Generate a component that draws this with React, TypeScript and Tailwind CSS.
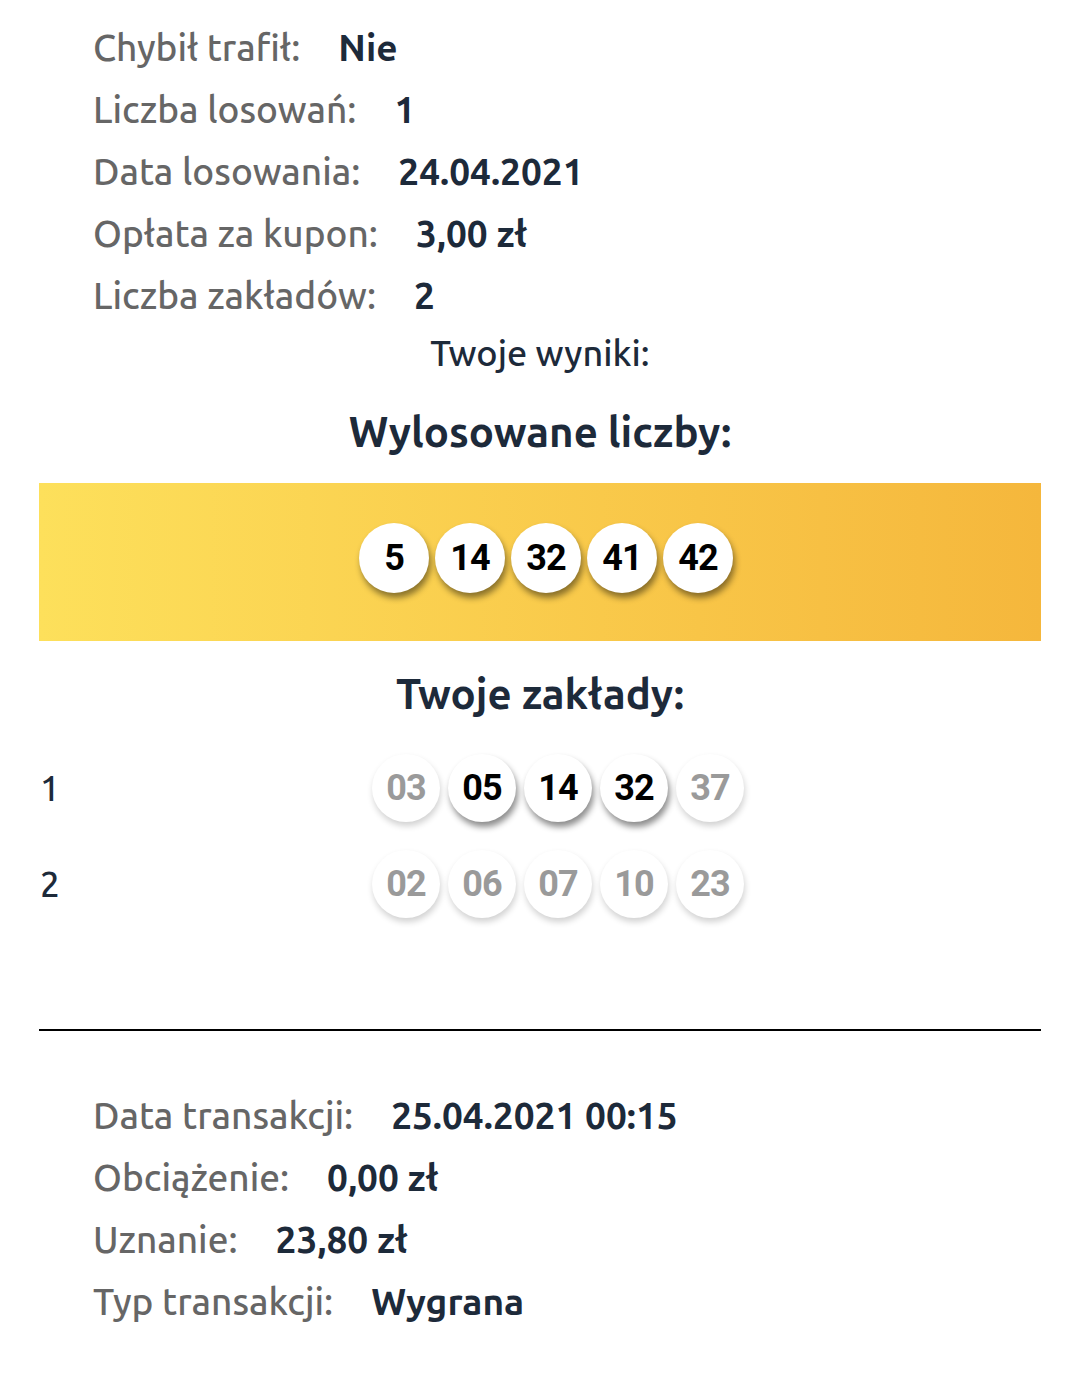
import React from 'react'

const font = { fontFamily: 'Ubuntu, "Noto Sans", sans-serif' }

function InfoRow({ label, value }: { label: string; value: string }) {
  return (
    <div className="flex items-center h-[62px]">
      <span className="text-[37px] font-medium text-[#666666]">{label}</span>
      <span className="ml-[38px] text-[37px] font-bold text-[#1d2a3a]">{value}</span>
    </div>
  )
}

function Ball({ n, size, hit = true }: { n: string; size: number; hit?: boolean }) {
  return (
    <div
      className={`flex items-center justify-center rounded-full bg-white font-bold tracking-[-1px] ${
        hit
          ? 'text-black shadow-[2px_5px_6px_rgba(0,0,0,0.45)]'
          : 'text-[#9a9a9a] shadow-[1px_4px_6px_rgba(0,0,0,0.18)]'
      }`}
      style={{ width: size, height: size, fontSize: 36, fontFamily: 'Roboto, "Noto Sans", sans-serif' }}
    >
      {n}
    </div>
  )
}

const drawn = ['5', '14', '32', '41', '42']
const bets = [
  { id: 1, nums: ['03', '05', '14', '32', '37'] },
  { id: 2, nums: ['02', '06', '07', '10', '23'] },
]

export default function App() {
  return (
    <div className="w-[1080px] min-h-[1377px] bg-white px-[39px] pt-[17px]" style={font}>
      {/* dane kuponu */}
      <div className="pl-[54px]">
        <InfoRow label="Chybił trafił:" value="Nie" />
        <InfoRow label="Liczba losowań:" value="1" />
        <InfoRow label="Data losowania:" value="24.04.2021" />
        <InfoRow label="Opłata za kupon:" value="3,00 zł" />
        <InfoRow label="Liczba zakładów:" value="2" />
      </div>

      <div className="text-center text-[36px] font-medium text-[#1d2a3a] h-[52px] leading-[52px]">Twoje wyniki:</div>
      <div className="text-center text-[42px] font-bold text-[#1d2a3a] h-[76px] leading-[76px] mt-[15px]">
        Wylosowane liczby:
      </div>

      {/* wylosowane liczby */}
      <div className="mt-[13px] h-[158px] flex items-center justify-center gap-[6px] pl-[12px] pb-[8px] bg-gradient-to-r from-[#fde05b] to-[#f5b73c]">
        {drawn.map((n) => (
          <Ball key={n} n={n} size={70} />
        ))}
      </div>

      <div className="text-center text-[42px] font-bold text-[#1d2a3a] h-[76px] leading-[76px] mt-[15px]">
        Twoje zakłady:
      </div>

      {/* zakłady */}
      <div className="mt-[8px]">
        {bets.map((b) => (
          <div key={b.id} className="flex items-center h-[96px]">
            <div className="w-[36px] text-[35px] font-medium text-[#1d2a3a] pl-[1px]">{b.id}</div>
            <div className="flex-1 flex justify-center gap-[8px]">
              {b.nums.map((n) => (
                <Ball key={n} n={n} size={68} hit={drawn.includes(String(Number(n)))} />
              ))}
            </div>
          </div>
        ))}
      </div>

      <div className="mt-[97px] border-t-2 border-black" />

      {/* transakcja */}
      <div className="pl-[54px] pt-[54px] pb-[40px]">
        <InfoRow label="Data transakcji:" value="25.04.2021 00:15" />
        <InfoRow label="Obciążenie:" value="0,00 zł" />
        <InfoRow label="Uznanie:" value="23,80 zł" />
        <InfoRow label="Typ transakcji:" value="Wygrana" />
      </div>
    </div>
  )
}
